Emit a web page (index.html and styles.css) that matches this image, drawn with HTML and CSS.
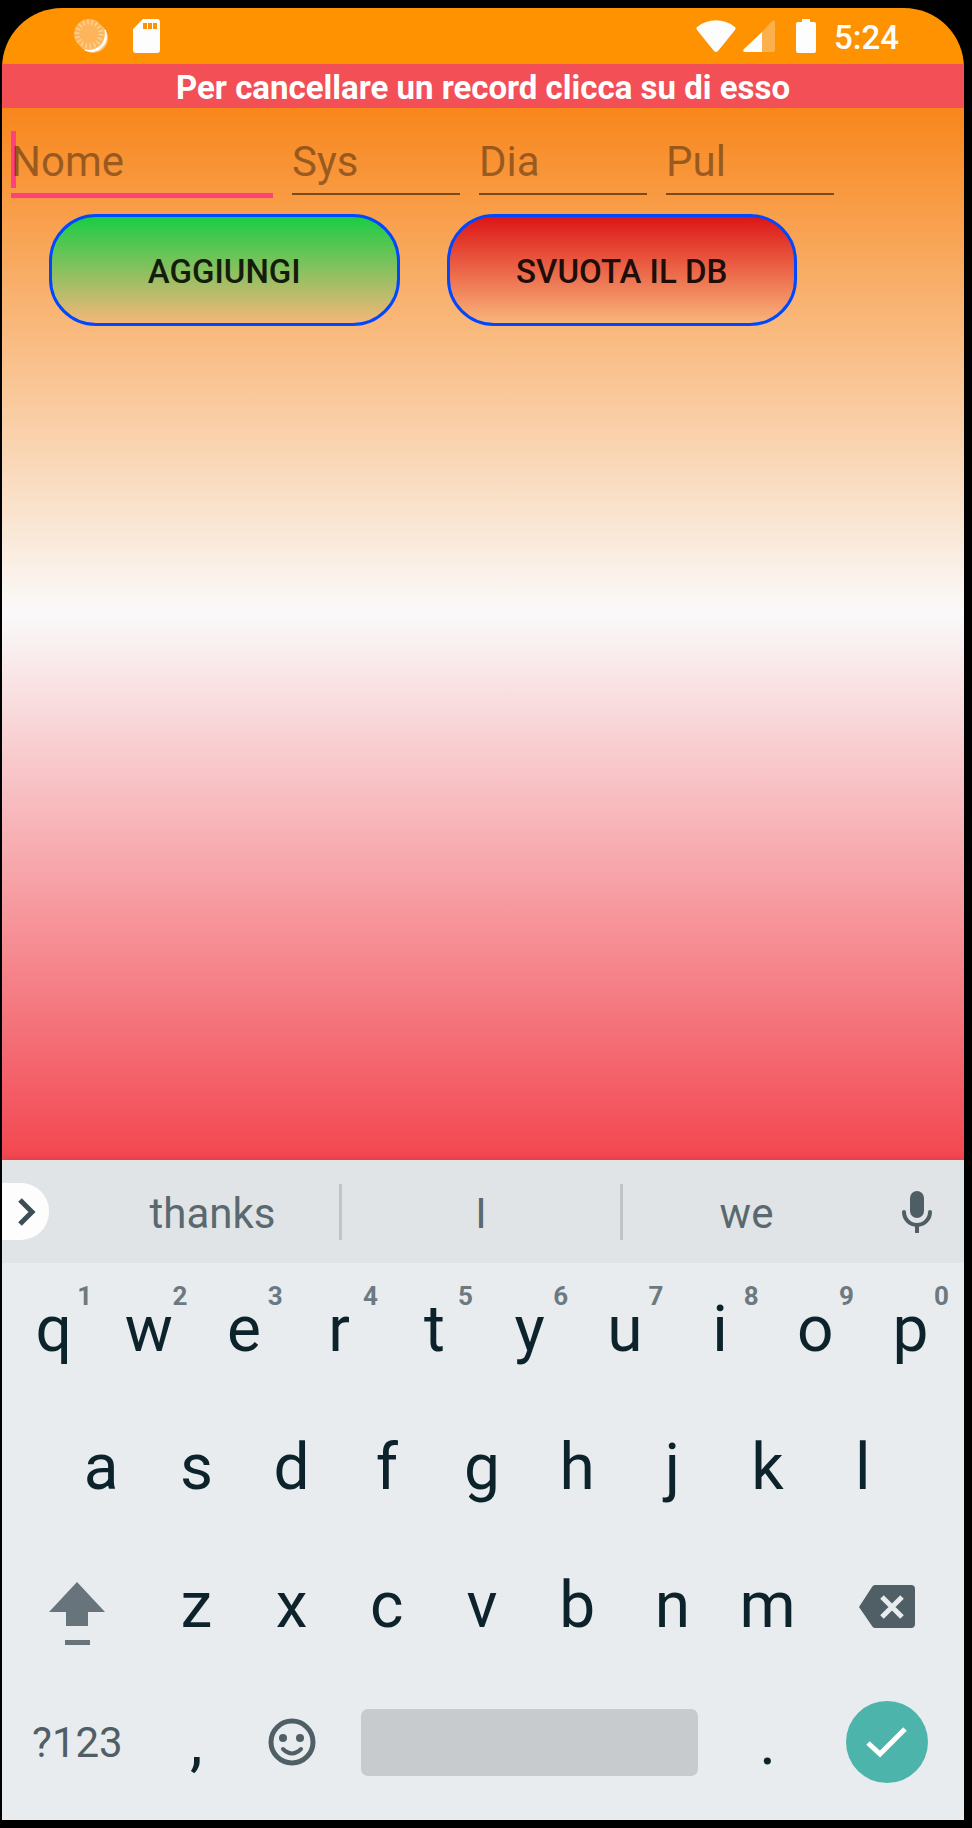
FILE: index.html
```html
<!DOCTYPE html>
<html lang="it">
<head>
<meta charset="utf-8">
<meta name="viewport" content="width=device-width, initial-scale=1">
<title>Pressione</title>
<link rel="stylesheet" href="styles.css">
</head>
<body>
<div class="phone">
  <header class="status">
    <div class="status-group status-left">
      <svg class="icon-sync" viewBox="0 0 34 34" aria-hidden="true">
        <circle cx="19" cy="19" r="15" fill="#fff" fill-opacity=".45"/>
        <path d="M31 11a15 15 0 0 1-20 20c11 3 23-7 20-20z" fill="#fff" stroke="#fff"/>
        <circle cx="15" cy="15" r="15" fill="#fdb45a"/>
        <circle cx="15" cy="15" r="12" fill="none" stroke="#fed29a" stroke-width="5" stroke-dasharray="1.400 2.790"/>
      </svg>
      <svg class="icon-sd" viewBox="0 0 27 34" aria-hidden="true">
        <path fill="#fdfdfd" fill-rule="evenodd" d="M10 0h14a3 3 0 0 1 3 3v28a3 3 0 0 1-3 3H3a3 3 0 0 1-3-3V10zM10 4v6h4V4zM15 4v6h4V4zM20 4v6h4V4z"/>
      </svg>
    </div>
    <div class="status-group status-right">
      <svg class="icon-wifi" viewBox="0 0 40 33" aria-hidden="true"><path fill="#fdfdfd" d="M1 7C12-2 28-2 39 7q1 1 0 3L22 31q-2 2-4 0L1 10q-1-2 0-3z"/></svg>
      <svg class="icon-cell" viewBox="0 0 32 32" aria-hidden="true"><path fill="#fbb04e" d="M19 12 29 1q3-2 3 1v28q0 2-2 2H19z"/><path fill="#fdfdfd" d="M19 12v20H2q-3 0-1-3z"/></svg>
      <svg class="icon-battery" viewBox="0 0 20 34" aria-hidden="true"><path fill="#fdfdfd" d="M6 0h8v3h4q2 0 2 2v27q0 2-2 2H2q-2 0-2-2V5q0-2 2-2h4z"/></svg>
      <time class="clock">5:24</time>
    </div>
  </header>

  <main class="app">
    <h1 class="banner">Per cancellare un record clicca su di esso</h1>
    <form class="form">
      <div class="fields">
        <label class="field field-name focused"><input type="text" placeholder="Nome" aria-label="Nome"></label>
        <label class="field"><input type="text" placeholder="Sys" aria-label="Sys"></label>
        <label class="field"><input type="text" placeholder="Dia" aria-label="Dia"></label>
        <label class="field"><input type="text" placeholder="Pul" aria-label="Pul"></label>
      </div>
      <div class="actions">
        <button type="button" class="action add">AGGIUNGI</button>
        <button type="button" class="action clear">SVUOTA IL DB</button>
      </div>
    </form>
  </main>

  <section class="keyboard" aria-label="Tastiera">
    <div class="suggestions">
      <button type="button" class="expand" aria-label="Espandi"><svg viewBox="0 0 18 28" aria-hidden="true"><path d="M2 2l12 12L2 26" fill="none" stroke="#3d4d55" stroke-width="5"/></svg></button>
      <button type="button" class="word">thanks</button>
      <button type="button" class="word middle">I</button>
      <button type="button" class="word">we</button>
      <button type="button" class="mic" aria-label="Voce"><svg viewBox="0 0 30 42" aria-hidden="true"><rect x="8" y="0" width="14" height="27" rx="7" fill="#4f5e65"/><path d="M2 21a13 13 0 0 0 26 0M15 34v7" fill="none" stroke="#4f5e65" stroke-width="4" stroke-linecap="round"/></svg></button>
    </div>
    <div class="keys">
      <div class="row">
        <button type="button" class="key">q<span class="hint">1</span></button>
        <button type="button" class="key">w<span class="hint">2</span></button>
        <button type="button" class="key">e<span class="hint">3</span></button>
        <button type="button" class="key">r<span class="hint">4</span></button>
        <button type="button" class="key">t<span class="hint">5</span></button>
        <button type="button" class="key">y<span class="hint">6</span></button>
        <button type="button" class="key">u<span class="hint">7</span></button>
        <button type="button" class="key">i<span class="hint">8</span></button>
        <button type="button" class="key">o<span class="hint">9</span></button>
        <button type="button" class="key">p<span class="hint">0</span></button>
      </div>
      <div class="row">
        <button type="button" class="key indent">a</button>
        <button type="button" class="key">s</button>
        <button type="button" class="key">d</button>
        <button type="button" class="key">f</button>
        <button type="button" class="key">g</button>
        <button type="button" class="key">h</button>
        <button type="button" class="key">j</button>
        <button type="button" class="key">k</button>
        <button type="button" class="key">l</button>
      </div>
      <div class="row">
        <button type="button" class="key wide shift" aria-label="Maiuscole"><svg viewBox="0 0 56 64" aria-hidden="true"><path fill="#67747b" d="M28 0l28 30H39v14H17V30H0zM16 58h25v5H16z"/></svg></button>
        <button type="button" class="key">z</button>
        <button type="button" class="key">x</button>
        <button type="button" class="key">c</button>
        <button type="button" class="key">v</button>
        <button type="button" class="key">b</button>
        <button type="button" class="key">n</button>
        <button type="button" class="key">m</button>
        <button type="button" class="key wide back" aria-label="Cancella"><svg viewBox="0 0 56 43" aria-hidden="true"><path fill="#505e66" d="M16 0h36q4 0 4 4v35q0 4-4 4H16q-2 0-3-2L0 22 13 2q1-2 3-2z"/><path d="M23 12l20 20M43 12L23 32" stroke="#e8ecef" stroke-width="5"/></svg></button>
      </div>
      <div class="row bottom">
        <button type="button" class="key wide symbols">?123</button>
        <button type="button" class="key">,</button>
        <button type="button" class="key emoji" aria-label="Emoji"><svg viewBox="0 0 48 48" aria-hidden="true"><circle cx="24" cy="24" r="21" fill="none" stroke="#505e66" stroke-width="5"/><circle cx="15" cy="20" r="4" fill="#505e66"/><circle cx="32" cy="20" r="4" fill="#505e66"/><path d="M15 31q9 9 18 0" fill="none" stroke="#505e66" stroke-width="4" stroke-linecap="round"/></svg></button>
        <button type="button" class="key space" aria-label="Spazio"><span class="space-bar"></span></button>
        <button type="button" class="key">.</button>
        <button type="button" class="key wide" aria-label="Fine"><span class="done"><svg viewBox="0 0 42 32" aria-hidden="true"><path d="M2 17l12 11L39 3" fill="none" stroke="#fff" stroke-width="5"/></svg></span></button>
      </div>
    </div>
  </section>
</div>
</body>
</html>
```

FILE: styles.css
```css
* { box-sizing: border-box; }

body {
  margin: 0;
  min-height: 100vh;
  padding: 8px 8px 8px 2px;
  background: #000;
  font-family: Roboto, sans-serif;
  display: flex;
}

button, input {
  font: inherit;
  color: inherit;
  border: 0;
  padding: 0;
  margin: 0;
  background: none;
}

svg { display: block; }

.phone {
  flex: 1;
  display: flex;
  flex-direction: column;
  border-radius: 60px 60px 0 0;
  overflow: hidden;
}

.status {
  height: 56px;
  padding: 0 65px 0 72px;
  display: flex;
  justify-content: space-between;
  align-items: center;
  background: #fe9200;
}

.status-group { display: flex; align-items: center; }
.status-left { gap: 25px; }
.icon-sync { width: 34px; height: 34px; }
.icon-sd { width: 27px; height: 34px; }
.icon-wifi { width: 40px; height: 33px; margin-right: 7px; }
.icon-cell { width: 32px; height: 32px; margin-right: 21px; }
.icon-battery { width: 20px; height: 34px; margin-right: 18px; }

.clock {
  padding-top: 3px;
  font-size: 33px;
  line-height: 40px;
  font-weight: 500;
  color: #fdfdfd;
}

.app {
  flex: 1;
  background: linear-gradient(#f87c08, #fafafa 50%, #f34650);
}

.banner {
  margin: 0;
  height: 44px;
  font-size: 33px;
  line-height: 48px;
  font-weight: 700;
  text-align: center;
  color: #fff;
  background: #f34f57;
}

.form { padding: 20px 130px 0 9px; }
.fields { display: flex; gap: 19px; }

.field {
  position: relative;
  flex: 168 1 0;
  height: 67px;
  border-bottom: 2px solid #7a4a1c;
}

.field-name { flex-grow: 262; }

.field.focused {
  height: 70px;
  border-bottom: 5px solid #ff4081;
}

.field.focused::before {
  content: "";
  position: absolute;
  left: 0;
  top: 3px;
  width: 5px;
  height: 57px;
  background: #ff4081;
}

.field input {
  position: relative;
  display: block;
  width: 100%;
  height: 65px;
  padding-top: 2px;
  font-size: 42px;
  outline: 0;
}

.field input::placeholder { color: #000; opacity: .38; }

.actions {
  display: flex;
  gap: 47px;
  padding: 16px 37px 0 38px;
}

.action {
  flex: 1;
  height: 112px;
  padding-top: 2px;
  border: 3px solid #0048ff;
  border-radius: 47px;
  font-size: 33px;
  font-weight: 500;
}

.add { color: #141c0c; background: linear-gradient(#1bcc45, #f5b679); }
.clear { color: #200d08; background: linear-gradient(#dd1616, #f9b57a); }

.keyboard {
  background: #e8ecef;
  box-shadow: 0 0 8px rgba(0, 0, 0, .15);
}

.suggestions {
  height: 103px;
  display: grid;
  grid-template-columns: 84px 253fr 284fr 247fr 94px;
  align-items: center;
  background: #e0e4e6;
  color: #5a686f;
}

.expand {
  width: 47px;
  height: 57px;
  padding-left: 16px;
  border-radius: 0 28px 28px 0;
  background: #fdfdfd;
}

.expand svg { width: 18px; height: 28px; }
.word { height: 56px; padding-top: 3px; font-size: 42px; }

.middle {
  border: solid #c0c5c8;
  border-width: 0 3px;
}

.mic { justify-self: center; }
.mic svg { width: 30px; height: 42px; }

.keys { padding: 0 6px 5px 4px; }

.row {
  display: grid;
  grid-template-columns: repeat(20, 1fr);
}

.key {
  position: relative;
  grid-column: span 2;
  height: 138px;
  padding-bottom: 6px;
  display: flex;
  align-items: center;
  justify-content: center;
  font-size: 64px;
  color: #0d232b;
}

.bottom .key { padding-bottom: 8px; }
.indent { grid-column: 2 / span 2; }
.wide { grid-column: span 3; }

.hint {
  position: absolute;
  top: 17px;
  right: 9px;
  font-size: 26px;
  line-height: 32px;
  font-weight: 700;
  color: #6d797f;
}

.key.shift { padding: 12px 0 0; }
.shift svg { width: 56px; height: 64px; }
.back { padding-bottom: 3px; }
.back svg { width: 56px; height: 43px; }
.emoji svg { width: 48px; height: 48px; }
.symbols { font-size: 42px; color: #505e66; }
.space { grid-column: span 8; }

.space-bar {
  flex: 1;
  height: 67px;
  margin: 0 22px;
  border-radius: 7px;
  background: #c7cbce;
}

.done {
  width: 82px;
  height: 82px;
  border-radius: 50%;
  display: flex;
  align-items: center;
  justify-content: center;
  background: #4db4ab;
}

.done svg { width: 42px; height: 32px; }
```
